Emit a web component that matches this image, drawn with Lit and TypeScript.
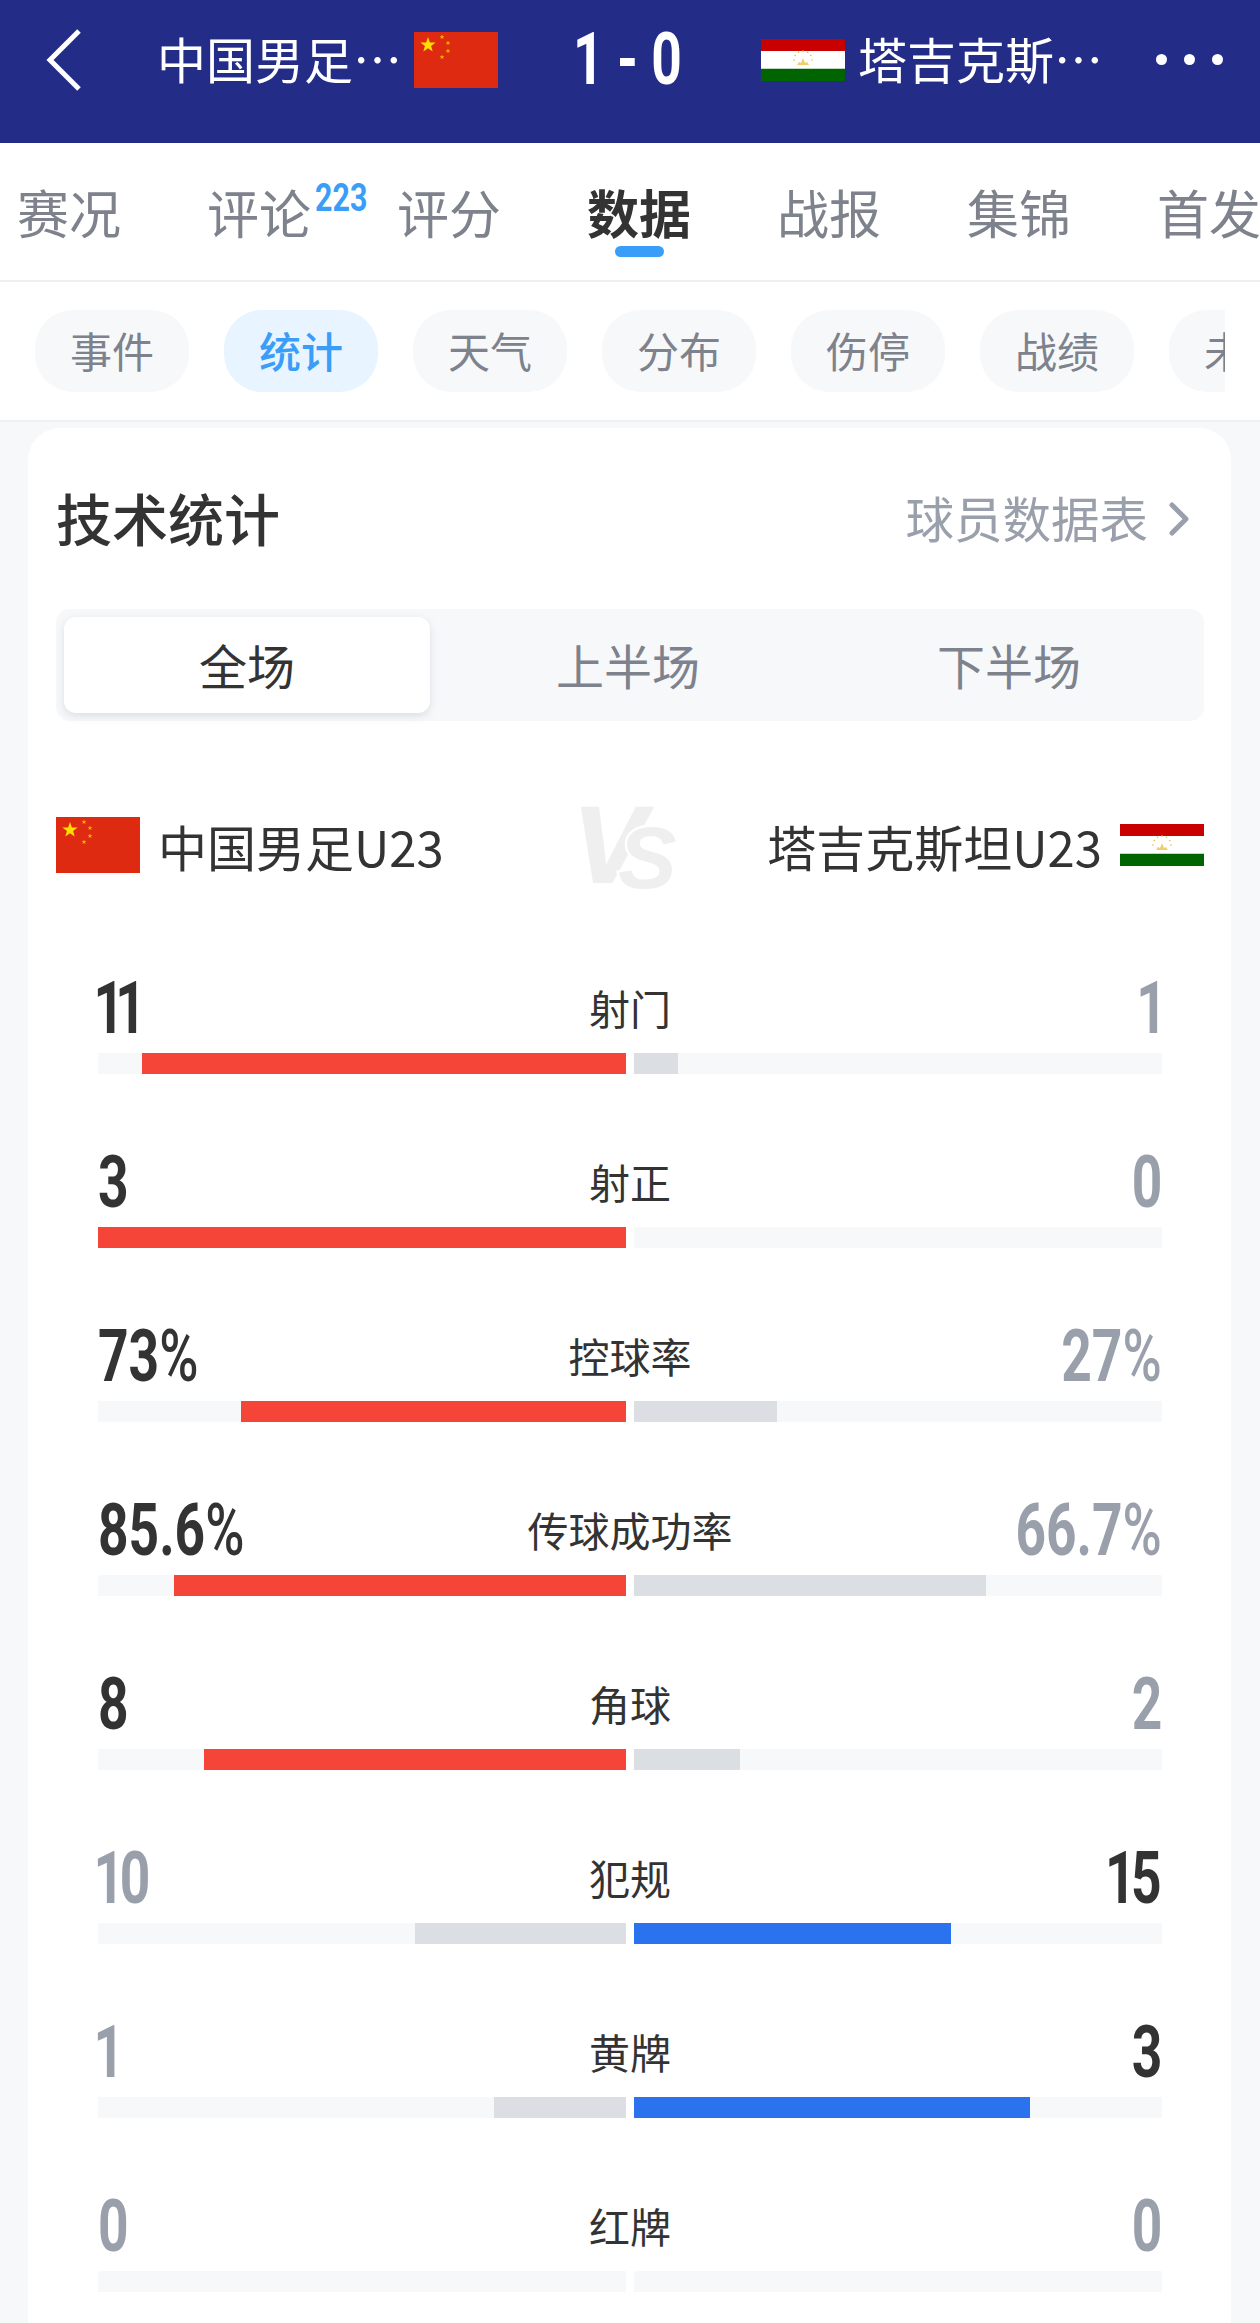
import { LitElement, html, css, svg } from "lit";
import { customElement } from "lit/decorators.js";

type Stat = { label: string; l: string; r: string; lp: number; rp: number; win: "l" | "r" | "" };
const STATS: Stat[] = [
  { label: "射门", l: "11", r: "1", lp: 91.67, rp: 8.33, win: "l" },
  { label: "射正", l: "3", r: "0", lp: 100, rp: 0, win: "l" },
  { label: "控球率", l: "73%", r: "27%", lp: 73, rp: 27, win: "l" },
  { label: "传球成功率", l: "85.6%", r: "66.7%", lp: 85.6, rp: 66.7, win: "l" },
  { label: "角球", l: "8", r: "2", lp: 80, rp: 20, win: "l" },
  { label: "犯规", l: "10", r: "15", lp: 40, rp: 60, win: "r" },
  { label: "黄牌", l: "1", r: "3", lp: 25, rp: 75, win: "r" },
  { label: "红牌", l: "0", r: "0", lp: 0, rp: 0, win: "" },
];
const TABS = ["赛况", "评论", "评分", "数据", "战报", "集锦", "首发"];
const PILLS = ["事件", "统计", "天气", "分布", "伤停", "战绩", "未来"];

function star(cx: number, cy: number, r: number, fill: string) {
  const pts: string[] = [];
  for (let i = 0; i < 10; i++) {
    const a = -Math.PI / 2 + (i * Math.PI) / 5;
    const rad = i % 2 ? r * 0.4 : r;
    pts.push(`${(cx + rad * Math.cos(a)).toFixed(2)},${(cy + rad * Math.sin(a)).toFixed(2)}`);
  }
  return svg`<polygon points=${pts.join(" ")} fill=${fill}></polygon>`;
}

const cnFlag = html`<svg class="flag" width="84" height="56" viewBox="0 0 84 56">
  <rect width="84" height="56" fill="#dd2a10"></rect>
  ${star(14, 13, 8, "#ffde00")}
  ${star(28, 5, 2.6, "#f7b500")}${star(34, 11, 2.6, "#f7b500")}${star(34, 19, 2.6, "#f7b500")}${star(28, 25, 2.6, "#f7b500")}
</svg>`;

function tjFlag() {
  const dots = [];
  for (let i = 0; i < 7; i++) {
    const a = Math.PI + (i * Math.PI) / 6;
    dots.push(svg`<circle cx=${42 + 9 * Math.cos(a)} cy=${21 + 9 * Math.sin(a)} r="0.8" fill="#e6b93c"></circle>`);
  }
  return html`<svg class="flag" width="84" height="42" viewBox="0 0 84 42">
    <rect width="84" height="42" fill="#fff"></rect>
    <rect width="84" height="12" fill="#c80000"></rect>
    <rect y="30" width="84" height="12" fill="#006400"></rect>
    <rect y="29" width="84" height="1" fill="#bfd8bf"></rect>
    ${dots}
    <path d="M36 26h12l-2-3-2 1-2-5-2 5-2-1z" fill="#f0cf6a"></path>
  </svg>`;
}

function valueText(v: string) {
  return [...v].map((c) =>
    c === "1" ? html`<i class="one">1</i>` : c === "%" ? html`<i class="pct">%</i>` : c
  );
}

@customElement("app-root")
export class AppRoot extends LitElement {
  static styles = css`
    :host {
      display: block;
      width: 1260px;
      height: 2323px;
      overflow: hidden;
      background: #f7f8fa;
      font-family: "Noto Sans CJK SC", "Noto Sans", sans-serif;
      color: #333;
    }
    .flag { display: block; flex: none; }
    .header {
      height: 143px;
      box-sizing: border-box;
      padding-bottom: 24px;
      background: #232c87;
      display: flex;
      align-items: center;
      color: #fff;
    }
    .back { display: block; flex: none; margin-left: 46px; margin-right: 75px; }
    .hname {
      flex: none;
      font-size: 49px;
      line-height: 60px;
      padding-bottom: 3px;
      white-space: nowrap;
    }
    .hname.a { width: 243px; margin-right: 14px; }
    .hname.b { width: 242px; margin-left: 13px; }
    .score {
      width: 259px;
      margin-right: 4px;
      flex: none;
      display: flex;
      justify-content: center;
    }
    .score span {
      display: block;
      font-family: Roboto, "Liberation Sans", sans-serif;
      font-weight: 700;
      font-size: 72px;
      line-height: 80px;
      white-space: pre;
      transform: scaleX(0.74);
    }
    .dots { display: flex; gap: 17px; margin-left: 56px; }
    .dots i { width: 11px; height: 11px; border-radius: 50%; background: #fff; }

    .tabs {
      height: 137px;
      background: #fff;
      border-bottom: 2px solid #eef0f3;
      display: flex;
      gap: 86px;
      padding-left: 17px;
      overflow: hidden;
    }
    .tab {
      position: relative;
      flex: none;
      width: 104px;
      padding-top: 39px;
      font-size: 52px;
      line-height: 60px;
      color: #7d828c;
      white-space: nowrap;
    }
    .tab.on { color: #333; font-weight: 700; }
    .tab.on::after {
      content: "";
      position: absolute;
      left: 28px;
      top: 103px;
      width: 49px;
      height: 11px;
      border-radius: 6px;
      background: #3a9ef8;
    }
    .sup {
      position: absolute;
      left: 108px;
      top: 33px;
      font-family: Roboto, "Liberation Sans", sans-serif;
      font-weight: 700;
      font-size: 38px;
      line-height: 44px;
      color: #3a9ef8;
      transform: scaleX(0.8);
      transform-origin: left center;
    }
    .pillwrap {
      background: #fff;
      padding: 28px 35px;
      border-bottom: 2px solid #eef0f3;
    }
    .pills { display: flex; gap: 35px; overflow: hidden; }
    .pill {
      flex: none;
      width: 154px;
      height: 82px;
      border-radius: 38px;
      background: #f7f8fa;
      color: #7d828c;
      font-size: 42px;
      line-height: 80px;
      text-align: center;
    }
    .pill.on { background: #e8f4ff; color: #3a9ef8; font-weight: 500; }

    .card {
      margin: 6px 29px 0 28px;
      padding: 51px 27px 0 28px;
      background: #fff;
      border-radius: 32px 32px 0 0;
      height: 1900px;
    }
    .title { display: flex; justify-content: space-between; align-items: center; height: 76px; }
    .title h2 { margin: 0; font-size: 56px; line-height: 76px; font-weight: 500; color: #333; }
    .more { display: flex; align-items: center; gap: 21px; padding-right: 15px; font-size: 48.5px; color: #9aa0ab; }
    .more svg { display: block; position: relative; top: 2px; }
    .seg {
      margin-top: 54px;
      height: 112px;
      box-sizing: border-box;
      padding: 8px;
      background: #f7f8fa;
      border-radius: 14px;
      display: grid;
      grid-template-columns: 366px 366px 366px;
      gap: 15px;
    }
    .seg div {
      text-align: center;
      font-size: 48px;
      line-height: 94px;
      color: #7d828c;
      border-radius: 12px;
    }
    .seg .on {
      background: #fff;
      color: #333;
      box-shadow: 0 3px 8px rgba(120, 130, 150, 0.22);
    }
    .teams {
      margin-top: 96px;
      height: 56px;
      display: flex;
      align-items: center;
      justify-content: space-between;
      font-size: 49px;
      line-height: 60px;
      color: #333;
    }
    .team { display: flex; align-items: center; gap: 18px; }
    .team span { position: relative; top: 1px; }
    .vs {
      width: 95px;
      height: 81px;
      position: relative;
      left: 15px;
      font-family: "Liberation Sans", sans-serif;
      font-weight: 700;
      font-style: italic;
      color: #efeff0;
    }
    .vs b { position: absolute; line-height: 1; }
    .vs .v { left: 0; top: -14px; font-size: 108px; -webkit-text-stroke: 2px #efeff0; }
    .vs .s {
      left: 45px;
      top: 9px;
      font-size: 88px;
      -webkit-text-stroke: 5px #fff;
      paint-order: stroke fill;
    }

    .stats { margin-top: 101px; padding: 0 42px; display: flex; flex-direction: column; gap: 74px; }
    .head {
      height: 70px;
      display: grid;
      grid-template-columns: 1fr auto 1fr;
      grid-template-rows: 70px;
      margin-bottom: 9px;
    }
    .label { font-size: 41px; line-height: 67px; padding-bottom: 3px; color: #333; text-align: center; }
    .val {
      display: block;
      width: fit-content;
      font-family: Roboto, "Liberation Sans", sans-serif;
      font-weight: 700;
      font-size: 72px;
      line-height: 70px;
      white-space: nowrap;
      color: #333;
      transform: scaleX(0.74);
      transform-origin: left center;
    }
    .val.r { justify-self: end; transform-origin: right center; }
    .val.lose { color: #9aa0ab; }
    .val i { font-style: normal; }
    .val .one { display: inline-block; margin: 0 -6px; }
    .val .pct { font-weight: 500; }
    .bars { display: grid; grid-template-columns: 1fr 1fr; gap: 8px; }
    .track { height: 21px; background: #f7f8fa; display: flex; }
    .track.l { justify-content: flex-end; }
    .fill { height: 100%; background: #dbdee3; }
    .fill.red { background: #f44538; }
    .fill.blue { background: #2b72ee; }
  `;

  render() {
    return html`
      <div class="header">
        <svg class="back" width="36" height="64" viewBox="0 0 36 64">
          <path d="M33 3 L4 32 L33 61" fill="none" stroke="#fff" stroke-width="5"></path>
        </svg>
        <div class="hname a">中国男足…</div>
        ${cnFlag}
        <div class="score"><span>1 - 0</span></div>
        ${tjFlag()}
        <div class="hname b">塔吉克斯…</div>
        <div class="dots"><i></i><i></i><i></i></div>
      </div>
      <div class="tabs">
        ${TABS.map(
          (t) => html`<div class="tab ${t === "数据" ? "on" : ""}">${t}${t === "评论" ? html`<span class="sup">223</span>` : ""}</div>`
        )}
      </div>
      <div class="pillwrap">
        <div class="pills">
          ${PILLS.map((p) => html`<div class="pill ${p === "统计" ? "on" : ""}">${p}</div>`)}
        </div>
      </div>
      <div class="card">
        <div class="title">
          <h2>技术统计</h2>
          <div class="more">
            球员数据表
            <svg width="20" height="34" viewBox="0 0 20 34">
              <path d="M3 3 L17 17 L3 31" fill="none" stroke="#9aa0ab" stroke-width="5" stroke-linecap="round" stroke-linejoin="round"></path>
            </svg>
          </div>
        </div>
        <div class="seg">
          <div class="on">全场</div>
          <div>上半场</div>
          <div>下半场</div>
        </div>
        <div class="teams">
          <div class="team">${cnFlag}<span>中国男足U23</span></div>
          <div class="vs"><b class="v">V</b><b class="s">S</b></div>
          <div class="team"><span>塔吉克斯坦U23</span>${tjFlag()}</div>
        </div>
        <div class="stats">
          ${STATS.map(
            (s) => html`<div class="row">
              <div class="head">
                <div class="val ${s.win === "l" ? "" : "lose"}">${valueText(s.l)}</div>
                <div class="label">${s.label}</div>
                <div class="val r ${s.win === "r" ? "" : "lose"}">${valueText(s.r)}</div>
              </div>
              <div class="bars">
                <div class="track l"><div class="fill ${s.win === "l" ? "red" : ""}" style="width:${s.lp}%"></div></div>
                <div class="track"><div class="fill ${s.win === "r" ? "blue" : ""}" style="width:${s.rp}%"></div></div>
              </div>
            </div>`
          )}
        </div>
      </div>
    `;
  }
}
